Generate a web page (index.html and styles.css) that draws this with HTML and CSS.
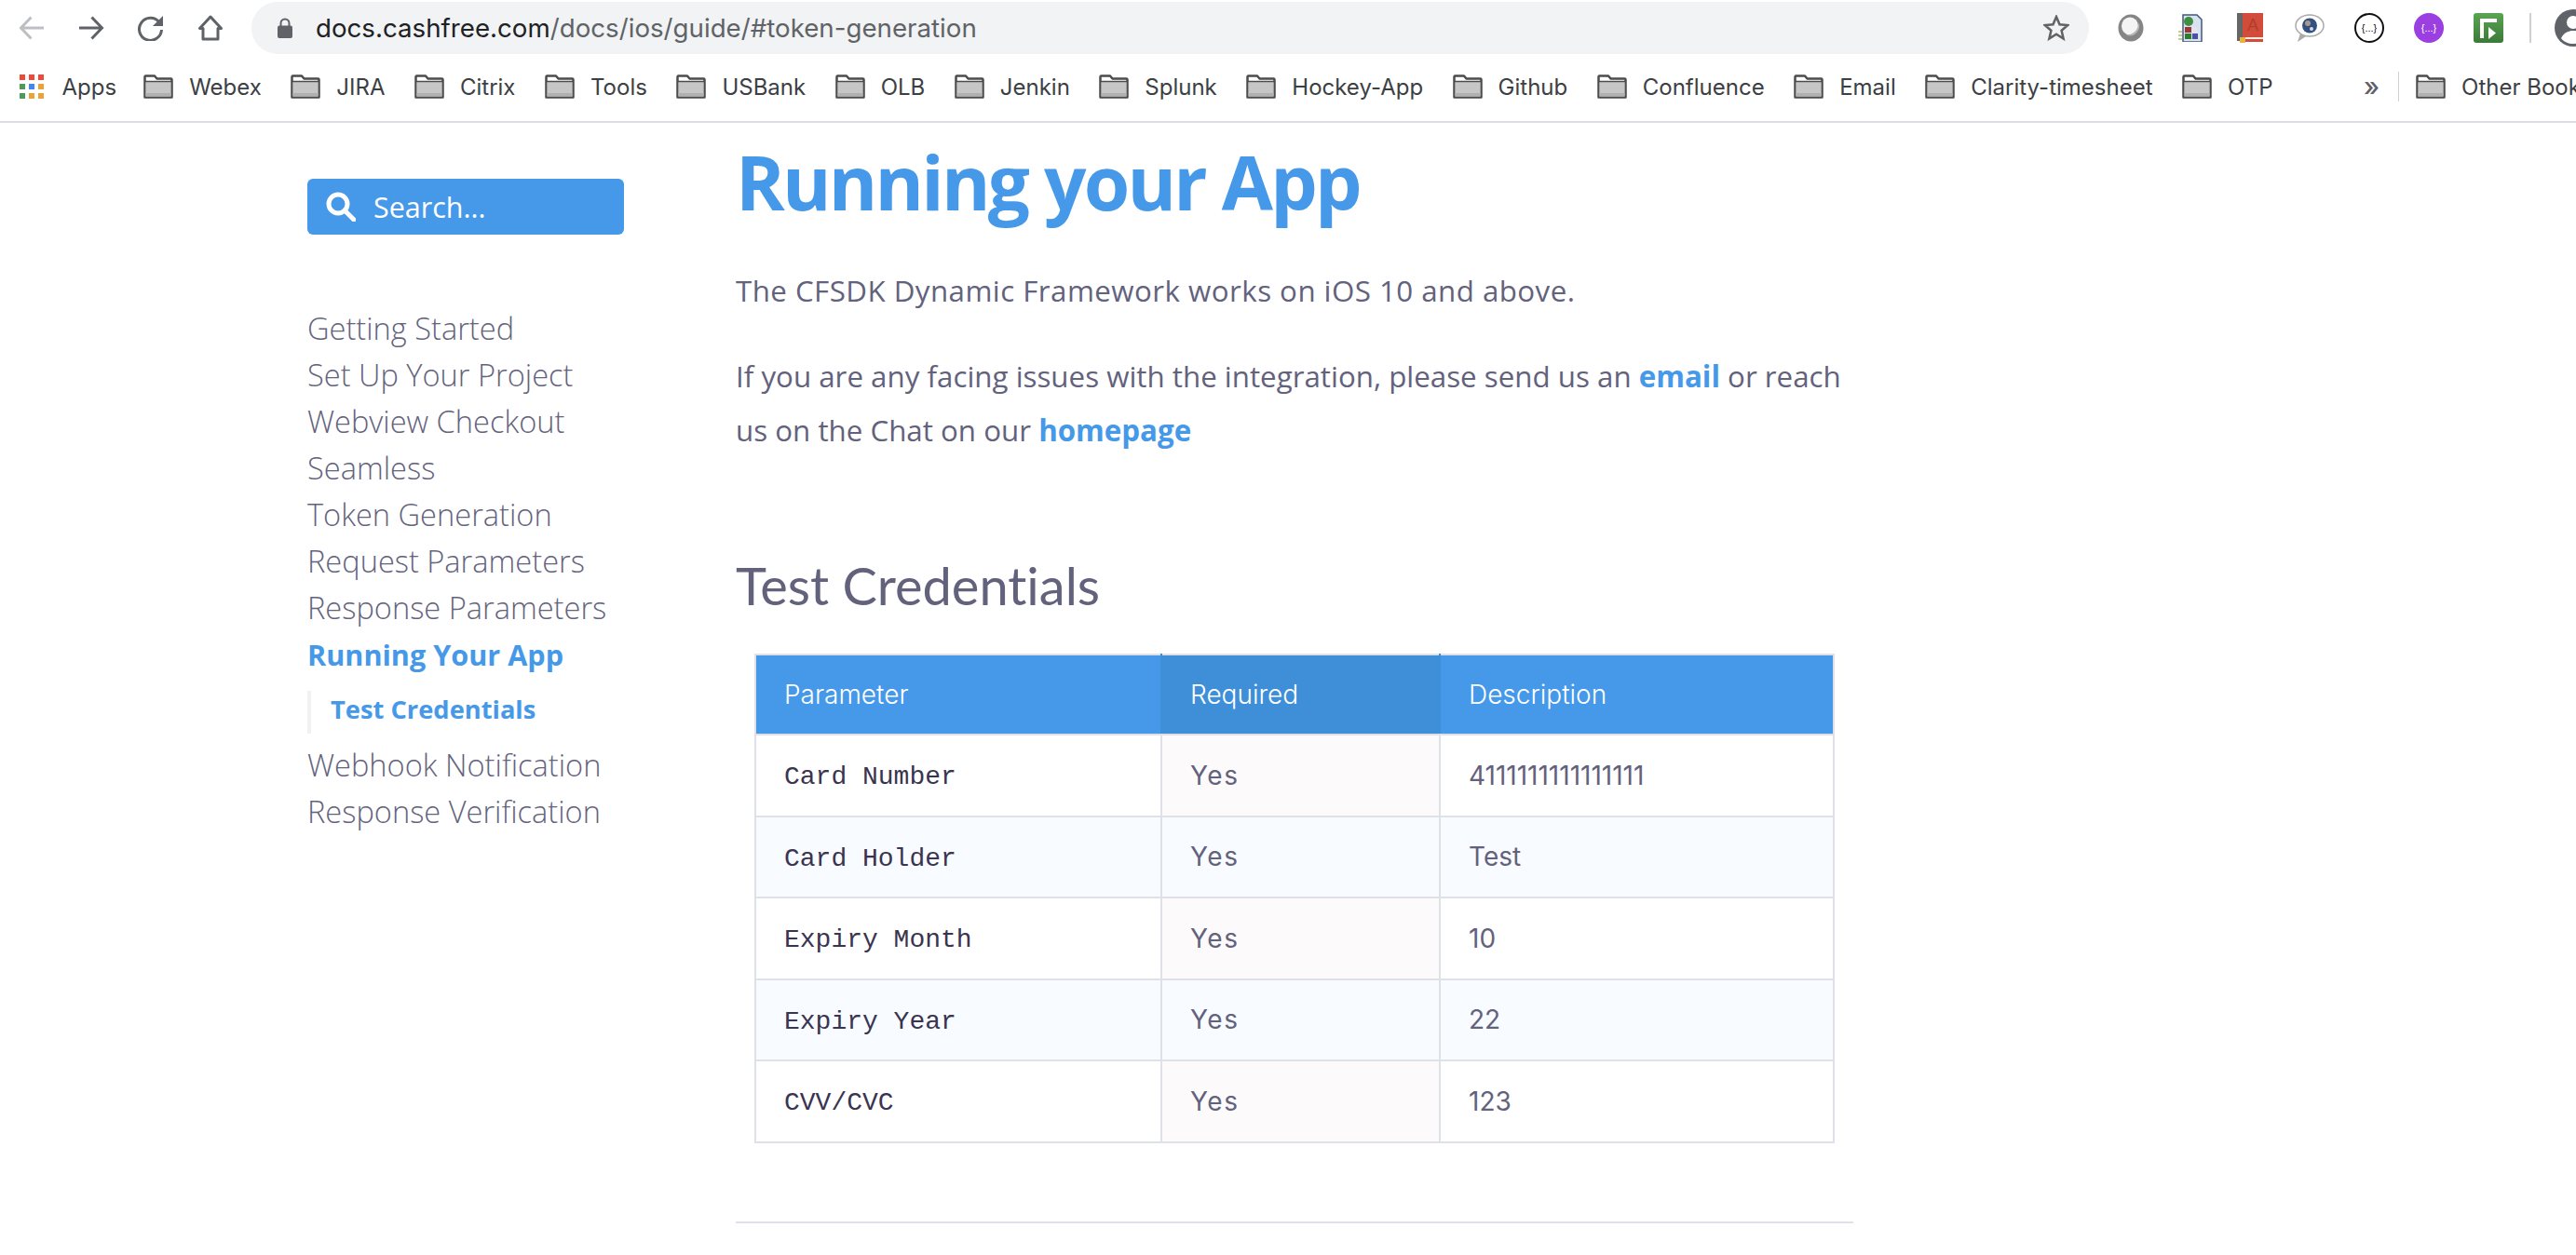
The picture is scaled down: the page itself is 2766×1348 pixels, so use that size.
FILE: index.html
```html
<!DOCTYPE html>
<html lang="en">
<head>
    <meta charset="UTF-8">
    <title>Running your App</title>
    <link rel="stylesheet" href="styles.css">
</head>
<body>
    <svg class="defs" width="0" height="0">
        <symbol id="folder" viewBox="0 0 32 26">
            <path d="M1.500 24.500V2.500q0-1 1-1h9.500l2.500 3h15q1 0 1 1v19z" fill="#fff" stroke="#4c4c4c" stroke-width="2.500" stroke-linejoin="round"/>
            <rect x="2.500" y="8" width="27" height="15.500" fill="#c6c6c6"/>
            <rect x="2.500" y="20" width="27" height="3.500" fill="#b0b0b0"/>
            <path d="M2 7.500h28" stroke="#4c4c4c" stroke-width="1.500"/>
        </symbol>
    </svg>

    <header class="chrome">
        <div class="toolbar">
            <div class="nav-btns">
                <svg class="nav-icon back" viewBox="0 0 28 28"><path d="M27 14H3M13.500 2.500 2.500 14l11 11.500"/></svg>
                <svg class="nav-icon" viewBox="0 0 28 28"><path d="M1 14h24M14.500 2.500l11 11.500-11 11.500"/></svg>
                <svg class="nav-icon" viewBox="0 0 28 28"><path d="M23 8a12 12 0 1 0 2.500 8"/><path class="solid" d="M27 1v11H16z"/></svg>
                <svg class="nav-icon" viewBox="0 0 28 28"><path d="M14 2 2.500 14.500h3.500v11.500h16V14.500h3.500z" stroke-linejoin="round"/></svg>
            </div>
            <div class="omnibox">
                <svg class="lock" viewBox="0 0 16 22"><path d="M3.500 9V6a4.500 4.500 0 0 1 9 0v3" fill="none" stroke="#5f6368" stroke-width="2"/><rect x="0" y="8.500" width="16" height="13.500" rx="2" fill="#5f6368"/></svg>
                <span class="url"><span class="host">docs.cashfree.com</span>/docs/ios/guide/#token-generation</span>
                <svg class="star" viewBox="0 0 28 28"><path d="M14 2l3.500 8.300 8.800.7-6.700 5.800 2 8.700L14 20.800l-7.600 4.700 2-8.700L1.700 11l8.800-.7z"/></svg>
            </div>
            <div class="extensions">
                <svg class="ext" width="28" height="30" viewBox="0 0 28 30"><ellipse cx="14" cy="15" rx="13.500" ry="14.500" fill="#858585"/><ellipse cx="13" cy="13" rx="9" ry="9.500" fill="#f4f4f4"/><path d="M22 9a10 10 0 0 1-14 13 12 12 0 0 0 14-13z" fill="#b5b5b5"/></svg>
                <svg class="ext" width="28" height="30" viewBox="0 0 28 30"><path d="M6 1h15l5 5v24H6z" fill="#d9e3f0" stroke="#3f5a80" stroke-width="1.500"/><circle cx="12" cy="8" r="5" fill="#3f8f3f"/><rect x="8" y="14" width="7" height="6" fill="#a03535"/><rect x="16" y="14" width="6" height="6" fill="#e4e4f0"/><rect x="8" y="21" width="7" height="6" fill="#2f7a2f"/><rect x="16" y="21" width="6" height="6" fill="#4a4fa8"/><path d="M1 19h4M1 23h4M1 27h4" stroke="#c9cf8a" stroke-width="2"/></svg>
                <svg class="ext" width="28" height="32" viewBox="0 0 28 32"><rect width="6" height="30" fill="#666"/><rect x="6" width="22" height="26" fill="#d14c3a"/><text x="17" y="19" text-anchor="middle" class="book-text">A</text><rect x="6" y="26" width="22" height="2" fill="#f1e9e4"/><rect x="6" y="28" width="22" height="3" fill="#d14c3a"/><rect x="3" y="26" width="6" height="6" fill="#e8b23c"/></svg>
                <svg class="ext" width="32" height="30" viewBox="0 0 32 30"><ellipse cx="16" cy="12.500" rx="15" ry="11.500" fill="#fff" stroke="#aaa" stroke-width="1.500"/><path d="M6 21 3 30l9-6z" fill="#aaa"/><circle cx="16" cy="12.500" r="8" fill="#34507f"/><circle cx="14" cy="10" r="3" fill="#a79a8c"/><circle cx="18" cy="16" r="2" fill="#d8d8e8"/></svg>
                <svg class="ext" width="32" height="32" viewBox="0 0 32 32"><circle cx="16" cy="16" r="15" fill="#fff" stroke="#111" stroke-width="2"/><text x="16" y="20" text-anchor="middle" class="ext-text">{...}</text></svg>
                <svg class="ext" width="32" height="32" viewBox="0 0 32 32"><circle cx="16" cy="16" r="16" fill="#9b3fe0"/><text x="16" y="20" text-anchor="middle" class="ext-text light">{...}</text></svg>
                <svg class="ext" width="32" height="32" viewBox="0 0 32 32"><defs><linearGradient id="greenfade" x1="0" y1="0" x2="0" y2="1"><stop offset="0" stop-color="#5aa552"/><stop offset="1" stop-color="#3b7a38"/></linearGradient></defs><rect width="32" height="32" rx="3" fill="url(#greenfade)"/><path d="M7 27V6h18v4H11v17z" fill="#fff"/><path d="M16 15l8 6.500-8 6.500z" fill="#fff"/></svg>
            </div>
            <div class="toolbar-sep"></div>
            <svg class="avatar" viewBox="0 0 40 40"><circle cx="20" cy="20" r="20" fill="#5f6368"/><circle cx="20" cy="14" r="7" fill="#fff"/><path d="M7 31c3-6 8-8 13-8s10 2 13 8c-3 4-8 6-13 6s-10-2-13-6z" fill="#fff"/></svg>
        </div>
        <nav class="bookmarks">
            <span class="bm apps">
                <svg class="apps-icon" viewBox="0 0 26 26">
                    <rect x="0" y="0" width="6" height="6" fill="#e84c3d"/><rect x="10" y="0" width="6" height="6" fill="#e84c3d"/><rect x="20" y="0" width="6" height="6" fill="#e84c3d"/>
                    <rect x="0" y="10" width="6" height="6" fill="#4f9a5b"/><rect x="10" y="10" width="6" height="6" fill="#4285f4"/><rect x="20" y="10" width="6" height="6" fill="#e8a436"/>
                    <rect x="0" y="20" width="6" height="6" fill="#4f9a5b"/><rect x="10" y="20" width="6" height="6" fill="#e8a436"/><rect x="20" y="20" width="6" height="6" fill="#e8a436"/>
                </svg>Apps</span>
            <span class="bm"><svg class="folder"><use href="#folder"/></svg>Webex</span>
            <span class="bm"><svg class="folder"><use href="#folder"/></svg>JIRA</span>
            <span class="bm"><svg class="folder"><use href="#folder"/></svg>Citrix</span>
            <span class="bm"><svg class="folder"><use href="#folder"/></svg>Tools</span>
            <span class="bm"><svg class="folder"><use href="#folder"/></svg>USBank</span>
            <span class="bm"><svg class="folder"><use href="#folder"/></svg>OLB</span>
            <span class="bm"><svg class="folder"><use href="#folder"/></svg>Jenkin</span>
            <span class="bm"><svg class="folder"><use href="#folder"/></svg>Splunk</span>
            <span class="bm"><svg class="folder"><use href="#folder"/></svg>Hockey-App</span>
            <span class="bm"><svg class="folder"><use href="#folder"/></svg>Github</span>
            <span class="bm"><svg class="folder"><use href="#folder"/></svg>Confluence</span>
            <span class="bm"><svg class="folder"><use href="#folder"/></svg>Email</span>
            <span class="bm"><svg class="folder"><use href="#folder"/></svg>Clarity-timesheet</span>
            <span class="bm"><svg class="folder"><use href="#folder"/></svg>OTP</span>
            <span class="more">»</span>
            <span class="bm-sep"></span>
            <span class="bm"><svg class="folder"><use href="#folder"/></svg>Other Bookmarks</span>
        </nav>
    </header>

    <div class="page">
        <aside class="sidebar">
            <div class="search">
                <svg class="search-icon" viewBox="0 0 32 32"><circle cx="13" cy="13" r="10" fill="none" stroke="#fff" stroke-width="5"/><path d="M20 20l10 10" stroke="#fff" stroke-width="5" stroke-linecap="round"/></svg>
                <span>Search...</span>
            </div>
            <ul class="toc">
                <li>Getting Started</li>
                <li>Set Up Your Project</li>
                <li>Webview Checkout</li>
                <li>Seamless</li>
                <li>Token Generation</li>
                <li>Request Parameters</li>
                <li>Response Parameters</li>
                <li class="active">Running Your App</li>
                <li class="sub">Test Credentials</li>
                <li>Webhook Notification</li>
                <li>Response Verification</li>
            </ul>
        </aside>
        <main class="content">
            <h1>Running your App</h1>
            <p class="intro">The CFSDK Dynamic Framework works on iOS 10 and above.</p>
            <p class="para2">If you are any facing issues with the integration, please send us an <a href="#">email</a> or reach us on the Chat on our <a href="#">homepage</a></p>
            <h2>Test Credentials</h2>
            <table>
                <thead>
                    <tr><th>Parameter</th><th>Required</th><th>Description</th></tr>
                </thead>
                <tbody>
                    <tr><td><code>Card Number</code></td><td>Yes</td><td>4111111111111111</td></tr>
                    <tr><td><code>Card Holder</code></td><td>Yes</td><td>Test</td></tr>
                    <tr><td><code>Expiry Month</code></td><td>Yes</td><td>10</td></tr>
                    <tr><td><code>Expiry Year</code></td><td>Yes</td><td>22</td></tr>
                    <tr><td><code>CVV/CVC</code></td><td>Yes</td><td>123</td></tr>
                </tbody>
            </table>
            <hr>
        </main>
    </div>
</body>
</html>
```
FILE: styles.css
```css
body {
    margin: 0;
    background-color: #fff;
    font-family: "Open Sans", "Noto Sans", sans-serif;
    color: #63627c;
    overflow: hidden;
}
.defs {
    display: block;
    height: 0;
}
.chrome {
    height: 130px;
    border-bottom: 2px solid #dcdce4;
    font-family: "Inter", "Liberation Sans", sans-serif;
}
.toolbar {
    display: flex;
    align-items: center;
    height: 60px;
    padding-left: 20px;
}
.nav-btns {
    display: flex;
    flex: none;
    width: 250px;
    gap: 36px;
}
.nav-icon {
    width: 28px;
    height: 28px;
    fill: none;
    stroke: #5f6368;
    stroke-width: 3;
}
.nav-icon.back {
    stroke: #bdbfc2;
}
.nav-icon .solid {
    fill: #5f6368;
    stroke: none;
}
.omnibox {
    display: flex;
    flex: none;
    align-items: center;
    width: 1973px;
    height: 56px;
    padding: 0 21px 0 28px;
    box-sizing: border-box;
    background-color: #f1f3f4;
    border-radius: 28px;
}
.lock {
    width: 16px;
    height: 22px;
    margin-right: 25px;
}
.url {
    flex: 1;
    font-size: 27.700px;
    color: #5f6368;
}
.host {
    color: #202124;
}
.star {
    width: 28px;
    height: 28px;
    fill: none;
    stroke: #5f6368;
    stroke-width: 2.500;
}
.extensions {
    display: grid;
    flex: none;
    grid-template-columns: repeat(7, 64px);
    justify-items: center;
    align-items: center;
    margin-left: 13px;
}
.ext {
    display: block;
}
.ext-text {
    font-family: "Liberation Sans", sans-serif;
    font-size: 11px;
    fill: #111;
}
.ext-text.light {
    fill: #fff;
}
.book-text {
    font-family: "Liberation Sans", sans-serif;
    font-size: 18px;
    fill: #b23c2d;
}
.toolbar-sep {
    flex: none;
    width: 2px;
    height: 32px;
    margin-left: 12px;
    background-color: #d0d0d0;
}
.avatar {
    flex: none;
    width: 40px;
    height: 40px;
    margin-left: 25px;
}
.bookmarks {
    display: flex;
    align-items: center;
    height: 66px;
    padding-left: 21px;
    font-size: 24px;
    color: #3c4043;
    white-space: nowrap;
}
.bm {
    display: flex;
    flex: none;
    align-items: center;
    margin-right: 31.500px;
}
.bm.apps {
    margin-right: 29px;
}
.apps-icon {
    width: 26px;
    height: 26px;
    margin-right: 19.500px;
}
.folder {
    width: 32px;
    height: 26px;
    margin-right: 17px;
}
.more {
    flex: none;
    margin-left: 66px;
    font-size: 28px;
    font-weight: 500;
    color: #5f6368;
}
.bm-sep {
    flex: none;
    width: 1px;
    height: 32px;
    margin: 0 18px 0 20px;
    background-color: #d0d2d6;
}
.page {
    display: flex;
    padding-left: 330px;
}
.sidebar {
    flex: none;
    width: 340px;
    padding-top: 60px;
}
.search {
    display: flex;
    align-items: center;
    height: 60px;
    padding-left: 20px;
    background-color: #4599e8;
    border-radius: 6px;
    color: #fff;
    font-size: 30.500px;
}
.search-icon {
    width: 32px;
    height: 32px;
    margin-right: 19px;
}
.toc {
    list-style: none;
    margin: 76px 0 0;
    padding: 0;
    font-size: 32.600px;
    font-weight: 300;
    line-height: 50px;
    color: #64637d;
    white-space: nowrap;
}
.toc .active {
    color: #4599e8;
    font-size: 30.600px;
    font-weight: 700;
}
.toc .sub {
    height: 46px;
    margin: 14px 0 9px;
    padding-left: 21px;
    border-left: 4px solid #f1f1f3;
    font-size: 27.300px;
    font-weight: 700;
    line-height: 40px;
    color: #4599e8;
}
.content {
    width: 1200px;
    margin-left: 120px;
}
h1 {
    margin: 18px 0 0;
    font-size: 80px;
    font-weight: 700;
    letter-spacing: -2.800px;
    line-height: 90px;
    color: #4599e8;
}
.content p {
    margin: 43px 0 0;
    font-size: 31.300px;
    line-height: 58px;
}
.content .intro {
    letter-spacing: 0.450px;
}
.content .para2 {
    margin-top: 34px;
}
.content a {
    color: #4599e8;
    font-weight: 700;
    text-decoration: none;
}
h2 {
    margin: 106px 0 0;
    font-family: "Lato", sans-serif;
    font-size: 56px;
    font-weight: 400;
    font-variant-ligatures: none;
    line-height: 64px;
}
table {
    width: 1160px;
    margin: 41px 0 0 20px;
    border-collapse: collapse;
    table-layout: fixed;
    font-family: "Inter", sans-serif;
    font-size: 28px;
}
th, td {
    padding: 0 0 0 30px;
    border: 2px solid #dfe1e8;
    text-align: left;
}
th {
    height: 84px;
    background-color: #4599e8;
    color: #fff;
    font-weight: 300;
}
th + th {
    border-left-color: #3f8fd8;
}
th:nth-child(1) {
    width: 404px;
    border-right-color: #3f8fd8;
}
th:nth-child(2) {
    width: 267px;
    background-color: #3f8fd8;
    border-right-color: #3f8fd8;
}
td {
    height: 85.500px;
}
td:nth-child(2) {
    background-color: #fcfafb;
    letter-spacing: 1.500px;
}
tbody tr:nth-child(even) td {
    background-color: #f8fbff;
}
code {
    font-family: "Liberation Mono", monospace;
    font-size: 28px;
    color: #3a3450;
}
hr {
    margin: 84px 0 0;
    border: 0;
    border-top: 2px solid #dfe1e8;
}
```
